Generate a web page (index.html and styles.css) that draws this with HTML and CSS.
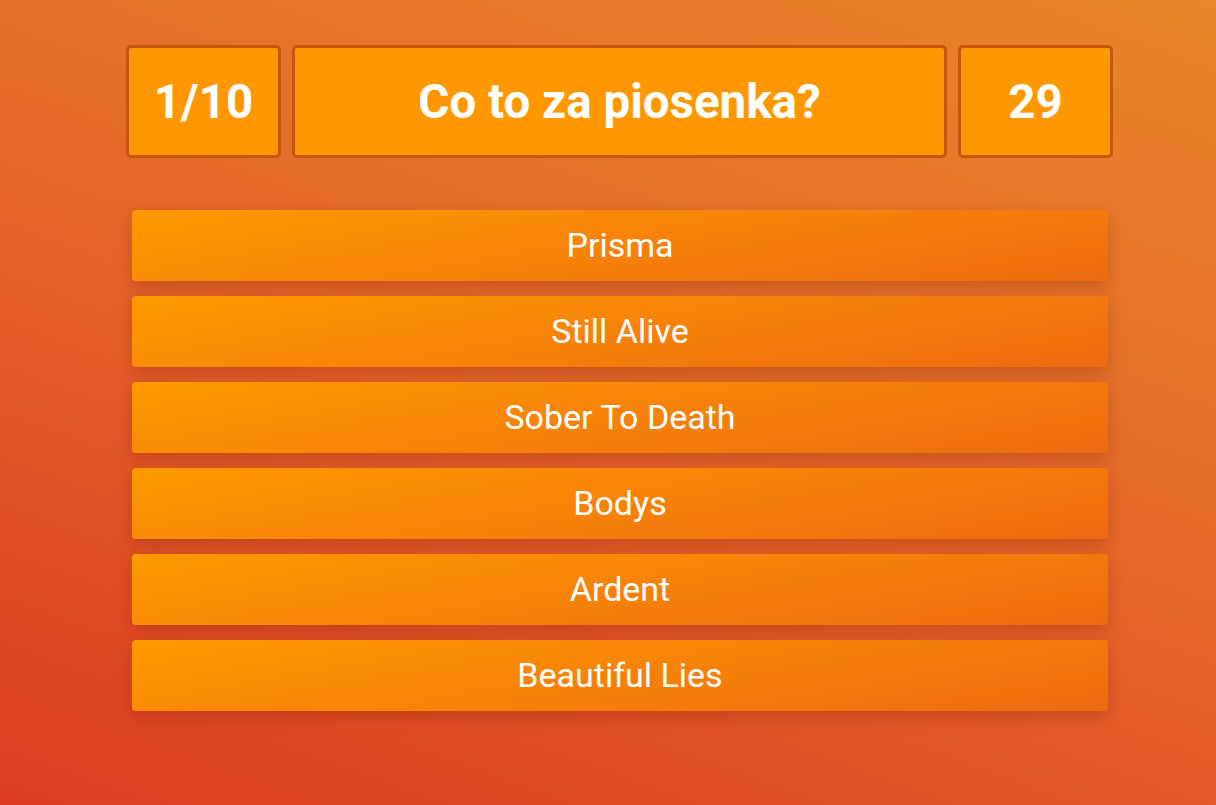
FILE: index.html
```html
<!DOCTYPE html>
<html lang="pl">
<head>
<meta charset="utf-8">
<title>Quiz</title>
<link rel="stylesheet" href="styles.css">
</head>
<body>
<main class="quiz">
  <header class="bar">
    <div class="box box-small">1/10</div>
    <div class="box box-wide">Co to za piosenka?</div>
    <div class="box box-small">29</div>
  </header>
  <section class="answers">
    <button class="answer">Prisma</button>
    <button class="answer">Still Alive</button>
    <button class="answer">Sober To Death</button>
    <button class="answer">Bodys</button>
    <button class="answer">Ardent</button>
    <button class="answer">Beautiful Lies</button>
  </section>
</main>
</body>
</html>
```
FILE: styles.css
```css
html, body {
  margin: 0;
  height: 100%;
}
body {
  background: linear-gradient(20deg, #dc3c21 0%, #e4622a 45%, #e8862a 100%);
  font-family: Roboto, "Liberation Sans", sans-serif;
  color: #fff;
  overflow: hidden;
}
.quiz {
  width: 987px;
  margin-left: 126px;
  padding-top: 45px;
}
.bar {
  display: flex;
  gap: 11px;
  height: 113px;
}
.box {
  box-sizing: border-box;
  background: #ff9800;
  border: 3px solid #c5560c;
  border-radius: 5px;
  display: flex;
  align-items: center;
  justify-content: center;
  font-size: 47.5px;
  font-weight: 700;
}
.box-small { width: 155px; }
.box-wide { flex: 1; }
.answers {
  margin: 52px 5px 0 6px;
  display: flex;
  flex-direction: column;
  gap: 15px;
}
.answer {
  height: 71px;
  border: none;
  border-radius: 4px;
  background: linear-gradient(170deg, #ff9a00 0%, #f5800a 55%, #ec6a10 100%);
  box-shadow: 0 6px 16px rgba(120, 30, 0, 0.28);
  color: #fff;
  font-family: Roboto, "Liberation Sans", sans-serif;
  font-size: 34px;
  padding: 0 0 2px;
}
```
